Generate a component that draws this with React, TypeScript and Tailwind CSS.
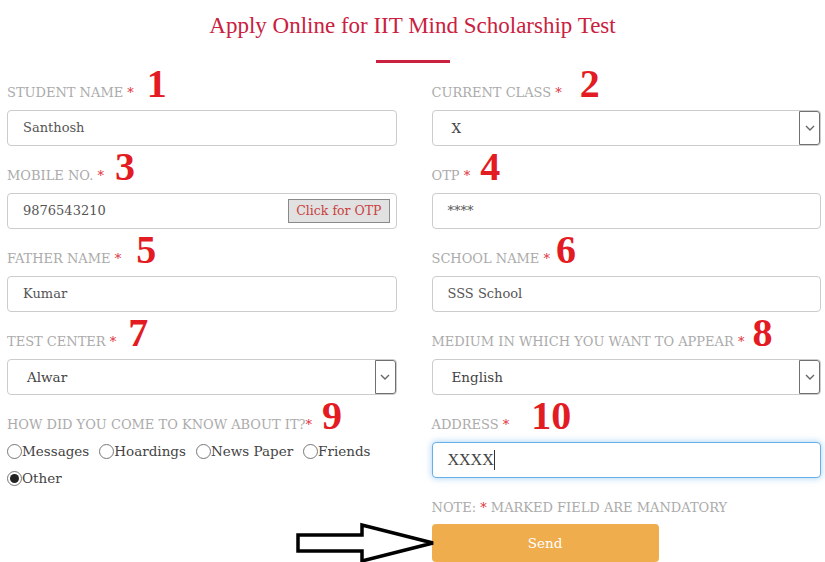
import type { ReactNode } from "react";

const SLAB = "font-['DejaVu_Serif',serif]";
const TIMES = "font-['Liberation_Serif',serif]";

function Label({ text, num, numClass }: { text: string; num: string; numClass: string }) {
  return (
    <div className="flex h-[47px] items-end pb-[9px]">
      <div className="flex items-baseline">
        <span className={`${SLAB} text-[13px] leading-[16px] uppercase text-[#ababab]`}>
          {text} <span className="text-[#e0303a]">*</span>
        </span>
        <span className={`${TIMES} ${numClass} text-[40px] font-bold leading-[16px] text-[#e31b23]`}>
          {num}
        </span>
      </div>
    </div>
  );
}

function TextBox({ children, focus = false }: { children: ReactNode; focus?: boolean }) {
  return (
    <div
      className={
        focus
          ? "flex h-[36px] items-center rounded-[4px] border border-[#66afe9] bg-white pl-[15px] pr-[6px] shadow-[0_0_7px_rgba(102,175,233,0.6)]"
          : "flex h-[36px] items-center rounded-[4px] border border-[#cccccc] bg-white pl-[15px] pr-[6px]"
      }
    >
      {children}
    </div>
  );
}

function Select({ value }: { value: string }) {
  return (
    <div className="flex h-[36px] items-stretch rounded-[4px] border border-[#cccccc] bg-white">
      <div className={`${SLAB} flex flex-1 items-center pl-[19px] text-[13.5px] text-[#444]`}>{value}</div>
      <div className="flex w-[21px] items-center justify-center rounded-r-[3px] border border-[#707070] bg-white">
        <svg width="10" height="6" viewBox="0 0 10 6">
          <path d="M1 1 L5 5 L9 1" fill="none" stroke="#666" strokeWidth="1.4" />
        </svg>
      </div>
    </div>
  );
}

function Radio({ label, checked = false }: { label: string; checked?: boolean }) {
  return (
    <span className="flex items-center">
      <span className="flex h-[15px] w-[15px] items-center justify-center rounded-full border border-[#777] bg-white">
        {checked && <span className="h-[9px] w-[9px] rounded-full bg-[#222]" />}
      </span>
      <span className={`${SLAB} text-[13.5px] leading-[18px] text-[#444]`}>{label}</span>
    </span>
  );
}

const valueText = `${SLAB} text-[13px] text-[#555]`;

export default function App() {
  return (
    <div className="relative h-[562px] w-[825px] overflow-hidden bg-white">
      <h1 className={`${TIMES} mt-[12px] text-center text-[23px] leading-[28px] text-[#c9213f]`}>
        Apply Online for IIT Mind Scholarship Test
      </h1>
      <div className="mx-auto mt-[20px] h-[3px] w-[74px] bg-[#c9213f]" />

      <div className="grid grid-cols-2 gap-x-[35px] pl-[7px] pr-[4px]">
        <div>
          <Label text="Student Name" num="1" numClass="ml-[13px]" />
          <TextBox>
            <span className={valueText}>Santhosh</span>
          </TextBox>
        </div>
        <div>
          <Label text="Current Class" num="2" numClass="ml-[18px]" />
          <Select value="X" />
        </div>

        <div>
          <Label text="Mobile No." num="3" numClass="ml-[11px]" />
          <TextBox>
            <span className={`${valueText} flex-1`}>9876543210</span>
            <span className={`${SLAB} flex h-[24px] items-center border border-[#8a8a8a] bg-[#e1e1e1] px-[7px] text-[12.5px] text-[#c9413f]`}>
              Click for OTP
            </span>
          </TextBox>
        </div>
        <div>
          <Label text="OTP" num="4" numClass="ml-[10px]" />
          <TextBox>
            <span className={`${SLAB} text-[13px] text-[#555]`}>****</span>
          </TextBox>
        </div>

        <div>
          <Label text="Father Name" num="5" numClass="ml-[15px]" />
          <TextBox>
            <span className={valueText}>Kumar</span>
          </TextBox>
        </div>
        <div>
          <Label text="School Name" num="6" numClass="ml-[6px]" />
          <TextBox>
            <span className={valueText}>SSS School</span>
          </TextBox>
        </div>

        <div>
          <Label text="Test Center" num="7" numClass="ml-[12px]" />
          <Select value="Alwar" />
        </div>
        <div>
          <Label text="Medium in which you want to appear" num="8" numClass="ml-[8px]" />
          <Select value="English" />
        </div>

        <div>
          <div className="flex h-[47px] items-end pb-[9px]">
            <div className="flex items-baseline">
              <span className={`${SLAB} text-[13px] leading-[16px] uppercase text-[#ababab]`}>
                How did you come to know about it?<span className="text-[#e0303a]">*</span>
              </span>
              <span className={`${TIMES} ml-[10px] text-[40px] font-bold leading-[16px] text-[#e31b23]`}>9</span>
            </div>
          </div>
          <div className="flex flex-wrap gap-x-[10px] gap-y-[9px] pr-[20px]">
            <Radio label="Messages" />
            <Radio label="Hoardings" />
            <Radio label="News Paper" />
            <Radio label="Friends" />
            <Radio label="Other" checked />
          </div>
        </div>
        <div>
          <Label text="Address" num="10" numClass="ml-[22px]" />
          <TextBox focus>
            <span className={`${TIMES} text-[16px] text-[#444]`}>XXXX</span>
            <span className="h-[20px] w-px bg-[#333]" />
          </TextBox>
          <div className={`${SLAB} mt-[22px] text-[13px] leading-[16px] text-[#ababab]`}>
            NOTE: <span className="text-[#e0303a]">*</span> MARKED FIELD ARE MANDATORY
          </div>
          <button className={`${SLAB} mt-[8px] flex h-[38px] w-[227px] items-center justify-center rounded-[4px] bg-[#efad4e] text-[13.5px] text-white`}>
            Send
          </button>
        </div>
      </div>

      <svg className="absolute left-[294px] top-[522px]" width="144" height="42" viewBox="0 0 144 42">
        <polygon
          points="4,13 68,13 68,3 139,21 68,39 68,29 4,29"
          fill="white"
          stroke="black"
          strokeWidth="3.5"
          strokeLinejoin="miter"
        />
      </svg>
    </div>
  );
}
